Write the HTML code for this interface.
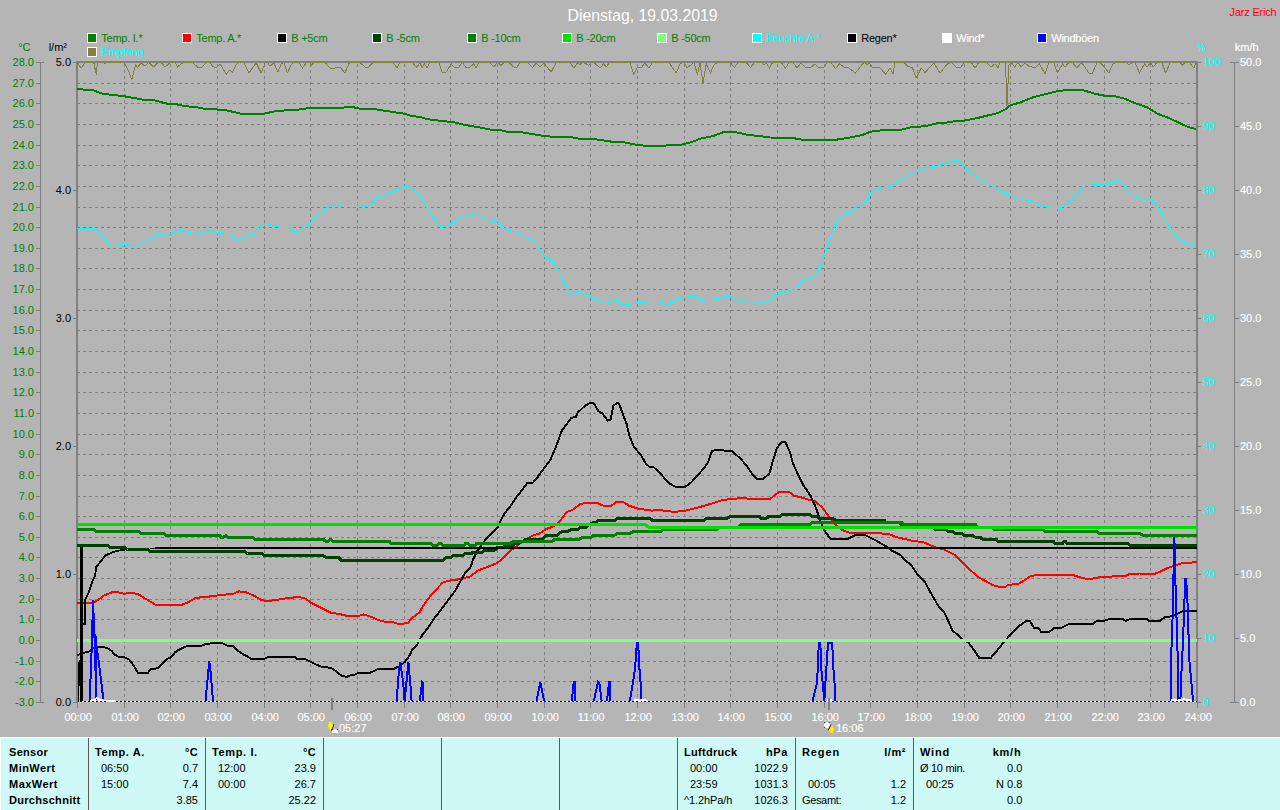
<!DOCTYPE html>
<html lang="de"><head><meta charset="utf-8"><title>Dienstag, 19.03.2019</title>
<style>
html,body{margin:0;padding:0;}
body{width:1280px;height:810px;overflow:hidden;background:#b5b5b5;position:relative;font-family:"Liberation Sans",Arial,sans-serif;font-size:11px;}
#chart{position:absolute;left:0;top:0;display:block;}
#chart text{font-family:"Liberation Sans",Arial,sans-serif;font-size:11px;}
#legend text{letter-spacing:-0.25px}.w{stroke:#fff;stroke-width:0.15px}
.g{fill:#008000}.c{fill:#00ffff}.k{fill:#000}.w{fill:#fff}
#tbl{position:absolute;left:0;top:737px;width:1280px;height:73px;background:#cef9f6;border-top:1px solid #fff;border-left:1px solid #fff;box-sizing:border-box;}
#tbl .sep{position:absolute;top:0;width:1px;height:73px;background:#5a5a5a;}
#tbl .col{position:absolute;top:0;width:118px;height:74px;}
#tbl .row{position:absolute;left:0;width:118px;height:16px;line-height:16px;white-space:nowrap;color:#000;}
#tbl .row span{position:absolute;top:0;}
#tbl .l{left:7px}.t{left:13px}#tbl .f{left:8px}.r{right:var(--r,7px);text-align:right}
#tbl b{font-weight:bold;letter-spacing:0.3px}
</style></head><body>
<svg id="chart" width="1280" height="738" viewBox="0 0 1280 738">
<rect x="0" y="0" width="1280" height="738" fill="#b5b5b5"/>
<text x="642.5" y="21" text-anchor="middle" class="w" style="font-size:16px;stroke:none" textLength="150" lengthAdjust="spacingAndGlyphs">Dienstag, 19.03.2019</text>
<text x="1276.5" y="16" text-anchor="end" fill="#ff0000" style="letter-spacing:-0.2px">Jarz Erich</text>
<g id="legend">
<rect x="87.5" y="33.5" width="9" height="9" fill="#008000" stroke="#fff"/>
<text x="101.3" y="41.7" class="g">Temp. I.*</text>
<rect x="182.5" y="33.5" width="9" height="9" fill="#ff0000" stroke="#fff"/>
<text x="196.3" y="41.7" class="g">Temp. A.*</text>
<rect x="277.5" y="33.5" width="9" height="9" fill="#000000" stroke="#fff"/>
<text x="291.3" y="41.7" class="g">B +5cm</text>
<rect x="372.5" y="33.5" width="9" height="9" fill="#004000" stroke="#fff"/>
<text x="386.3" y="41.7" class="g">B -5cm</text>
<rect x="467.5" y="33.5" width="9" height="9" fill="#008000" stroke="#fff"/>
<text x="481.3" y="41.7" class="g">B -10cm</text>
<rect x="562.5" y="33.5" width="9" height="9" fill="#00e000" stroke="#fff"/>
<text x="576.3" y="41.7" class="g">B -20cm</text>
<rect x="657.5" y="33.5" width="9" height="9" fill="#80ff80" stroke="#fff"/>
<text x="671.3" y="41.7" class="g">B -50cm</text>
<rect x="752.5" y="33.5" width="9" height="9" fill="#00ffff" stroke="#fff"/>
<text x="766.3" y="41.7" class="c">Feuchte A.*</text>
<rect x="847.5" y="33.5" width="9" height="9" fill="#000000" stroke="#fff"/>
<text x="861.3" y="41.7" class="k">Regen*</text>
<rect x="942.5" y="33.5" width="9" height="9" fill="#ffffff" stroke="#fff"/>
<text x="956.3" y="41.7" class="w">Wind*</text>
<rect x="1037.5" y="33.5" width="9" height="9" fill="#0000ff" stroke="#fff"/>
<text x="1051.3" y="41.7" class="w">Windböen</text>
<rect x="87.5" y="47.5" width="9" height="9" fill="#808040" stroke="#fff"/>
<text x="101.3" y="55.7" class="c">Empfang</text>
</g>
<g id="grid" stroke="#808080" stroke-width="1" stroke-dasharray="3 3" shape-rendering="crispEdges">
<line x1="124.5" y1="703" x2="124.5" y2="62"/>
<line x1="170.5" y1="703" x2="170.5" y2="62"/>
<line x1="217.5" y1="703" x2="217.5" y2="62"/>
<line x1="264.5" y1="703" x2="264.5" y2="62"/>
<line x1="310.5" y1="703" x2="310.5" y2="62"/>
<line x1="357.5" y1="703" x2="357.5" y2="62"/>
<line x1="404.5" y1="703" x2="404.5" y2="62"/>
<line x1="450.5" y1="703" x2="450.5" y2="62"/>
<line x1="497.5" y1="703" x2="497.5" y2="62"/>
<line x1="544.5" y1="703" x2="544.5" y2="62"/>
<line x1="590.5" y1="703" x2="590.5" y2="62"/>
<line x1="637.5" y1="703" x2="637.5" y2="62"/>
<line x1="684.5" y1="703" x2="684.5" y2="62"/>
<line x1="730.5" y1="703" x2="730.5" y2="62"/>
<line x1="777.5" y1="703" x2="777.5" y2="62"/>
<line x1="824.5" y1="703" x2="824.5" y2="62"/>
<line x1="870.5" y1="703" x2="870.5" y2="62"/>
<line x1="917.5" y1="703" x2="917.5" y2="62"/>
<line x1="964.5" y1="703" x2="964.5" y2="62"/>
<line x1="1010.5" y1="703" x2="1010.5" y2="62"/>
<line x1="1057.5" y1="703" x2="1057.5" y2="62"/>
<line x1="1104.5" y1="703" x2="1104.5" y2="62"/>
<line x1="1150.5" y1="703" x2="1150.5" y2="62"/>
<line x1="77" y1="681.5" x2="1197" y2="681.5"/>
<line x1="77" y1="661.5" x2="1197" y2="661.5"/>
<line x1="77" y1="640.5" x2="1197" y2="640.5"/>
<line x1="77" y1="619.5" x2="1197" y2="619.5"/>
<line x1="77" y1="599.5" x2="1197" y2="599.5"/>
<line x1="77" y1="578.5" x2="1197" y2="578.5"/>
<line x1="77" y1="557.5" x2="1197" y2="557.5"/>
<line x1="77" y1="537.5" x2="1197" y2="537.5"/>
<line x1="77" y1="516.5" x2="1197" y2="516.5"/>
<line x1="77" y1="496.5" x2="1197" y2="496.5"/>
<line x1="77" y1="475.5" x2="1197" y2="475.5"/>
<line x1="77" y1="454.5" x2="1197" y2="454.5"/>
<line x1="77" y1="434.5" x2="1197" y2="434.5"/>
<line x1="77" y1="413.5" x2="1197" y2="413.5"/>
<line x1="77" y1="392.5" x2="1197" y2="392.5"/>
<line x1="77" y1="372.5" x2="1197" y2="372.5"/>
<line x1="77" y1="351.5" x2="1197" y2="351.5"/>
<line x1="77" y1="330.5" x2="1197" y2="330.5"/>
<line x1="77" y1="310.5" x2="1197" y2="310.5"/>
<line x1="77" y1="289.5" x2="1197" y2="289.5"/>
<line x1="77" y1="268.5" x2="1197" y2="268.5"/>
<line x1="77" y1="248.5" x2="1197" y2="248.5"/>
<line x1="77" y1="227.5" x2="1197" y2="227.5"/>
<line x1="77" y1="207.5" x2="1197" y2="207.5"/>
<line x1="77" y1="186.5" x2="1197" y2="186.5"/>
<line x1="77" y1="165.5" x2="1197" y2="165.5"/>
<line x1="77" y1="145.5" x2="1197" y2="145.5"/>
<line x1="77" y1="124.5" x2="1197" y2="124.5"/>
<line x1="77" y1="103.5" x2="1197" y2="103.5"/>
<line x1="77" y1="83.5" x2="1197" y2="83.5"/>
</g>
<g id="axisT" shape-rendering="crispEdges" stroke="#808080">
<line x1="40.5" y1="62" x2="40.5" y2="703"/>
<line x1="36" y1="702.5" x2="44" y2="702.5"/>
<line x1="36" y1="681.5" x2="40" y2="681.5"/>
<line x1="36" y1="661.5" x2="40" y2="661.5"/>
<line x1="36" y1="640.5" x2="40" y2="640.5"/>
<line x1="36" y1="619.5" x2="40" y2="619.5"/>
<line x1="36" y1="599.5" x2="40" y2="599.5"/>
<line x1="36" y1="578.5" x2="40" y2="578.5"/>
<line x1="36" y1="557.5" x2="40" y2="557.5"/>
<line x1="36" y1="537.5" x2="40" y2="537.5"/>
<line x1="36" y1="516.5" x2="40" y2="516.5"/>
<line x1="36" y1="496.5" x2="40" y2="496.5"/>
<line x1="36" y1="475.5" x2="40" y2="475.5"/>
<line x1="36" y1="454.5" x2="40" y2="454.5"/>
<line x1="36" y1="434.5" x2="40" y2="434.5"/>
<line x1="36" y1="413.5" x2="40" y2="413.5"/>
<line x1="36" y1="392.5" x2="40" y2="392.5"/>
<line x1="36" y1="372.5" x2="40" y2="372.5"/>
<line x1="36" y1="351.5" x2="40" y2="351.5"/>
<line x1="36" y1="330.5" x2="40" y2="330.5"/>
<line x1="36" y1="310.5" x2="40" y2="310.5"/>
<line x1="36" y1="289.5" x2="40" y2="289.5"/>
<line x1="36" y1="268.5" x2="40" y2="268.5"/>
<line x1="36" y1="248.5" x2="40" y2="248.5"/>
<line x1="36" y1="227.5" x2="40" y2="227.5"/>
<line x1="36" y1="207.5" x2="40" y2="207.5"/>
<line x1="36" y1="186.5" x2="40" y2="186.5"/>
<line x1="36" y1="165.5" x2="40" y2="165.5"/>
<line x1="36" y1="145.5" x2="40" y2="145.5"/>
<line x1="36" y1="124.5" x2="40" y2="124.5"/>
<line x1="36" y1="103.5" x2="40" y2="103.5"/>
<line x1="36" y1="83.5" x2="40" y2="83.5"/>
<line x1="36" y1="62.5" x2="44" y2="62.5"/>
</g>
<g id="lblT" class="g" text-anchor="end">
<text x="30.5" y="50.5">°C</text>
<text x="34" y="706.2">-3.0</text>
<text x="34" y="685.2">-2.0</text>
<text x="34" y="665.2">-1.0</text>
<text x="34" y="644.2">0.0</text>
<text x="34" y="623.2">1.0</text>
<text x="34" y="603.2">2.0</text>
<text x="34" y="582.2">3.0</text>
<text x="34" y="561.2">4.0</text>
<text x="34" y="541.2">5.0</text>
<text x="34" y="520.2">6.0</text>
<text x="34" y="500.2">7.0</text>
<text x="34" y="479.2">8.0</text>
<text x="34" y="458.2">9.0</text>
<text x="34" y="438.2">10.0</text>
<text x="34" y="417.2">11.0</text>
<text x="34" y="396.2">12.0</text>
<text x="34" y="376.2">13.0</text>
<text x="34" y="355.2">14.0</text>
<text x="34" y="334.2">15.0</text>
<text x="34" y="314.2">16.0</text>
<text x="34" y="293.2">17.0</text>
<text x="34" y="272.2">18.0</text>
<text x="34" y="252.2">19.0</text>
<text x="34" y="231.2">20.0</text>
<text x="34" y="211.2">21.0</text>
<text x="34" y="190.2">22.0</text>
<text x="34" y="169.2">23.0</text>
<text x="34" y="149.2">24.0</text>
<text x="34" y="128.2">25.0</text>
<text x="34" y="107.2">26.0</text>
<text x="34" y="87.2">27.0</text>
<text x="34" y="66.2">28.0</text>
</g>
<g id="lblR" class="k" text-anchor="end">
<text x="67" y="50.5">l/m²</text>
<text x="71" y="706.2">0.0</text>
<text x="71" y="578.2">1.0</text>
<text x="71" y="450.2">2.0</text>
<text x="71" y="322.2">3.0</text>
<text x="71" y="194.2">4.0</text>
<text x="71" y="66.2">5.0</text>
</g>
<g shape-rendering="crispEdges" stroke="#808080">
<line x1="73" y1="702.5" x2="77" y2="702.5"/>
<line x1="73" y1="574.5" x2="77" y2="574.5"/>
<line x1="73" y1="446.5" x2="77" y2="446.5"/>
<line x1="73" y1="318.5" x2="77" y2="318.5"/>
<line x1="73" y1="190.5" x2="77" y2="190.5"/>
<line x1="73" y1="62.5" x2="77" y2="62.5"/>
</g>
<g id="lblH" class="c">
<text x="1197.5" y="50.5" textLength="8" lengthAdjust="spacingAndGlyphs">%</text>
<text x="1203" y="706.2">0</text>
<text x="1203" y="642.2">10</text>
<text x="1203" y="578.2">20</text>
<text x="1203" y="514.2">30</text>
<text x="1203" y="450.2">40</text>
<text x="1203" y="386.2">50</text>
<text x="1203" y="322.2">60</text>
<text x="1203" y="258.2">70</text>
<text x="1203" y="194.2">80</text>
<text x="1203" y="130.2">90</text>
<text x="1203" y="66.2">100</text>
</g>
<g shape-rendering="crispEdges" stroke="#808080">
<line x1="1197" y1="702.5" x2="1201" y2="702.5"/>
<line x1="1197" y1="638.5" x2="1201" y2="638.5"/>
<line x1="1197" y1="574.5" x2="1201" y2="574.5"/>
<line x1="1197" y1="510.5" x2="1201" y2="510.5"/>
<line x1="1197" y1="446.5" x2="1201" y2="446.5"/>
<line x1="1197" y1="382.5" x2="1201" y2="382.5"/>
<line x1="1197" y1="318.5" x2="1201" y2="318.5"/>
<line x1="1197" y1="254.5" x2="1201" y2="254.5"/>
<line x1="1197" y1="190.5" x2="1201" y2="190.5"/>
<line x1="1197" y1="126.5" x2="1201" y2="126.5"/>
<line x1="1197" y1="62.5" x2="1201" y2="62.5"/>
</g>
<g shape-rendering="crispEdges" stroke="#808080">
<line x1="1234.5" y1="62" x2="1234.5" y2="703"/>
<line x1="1230" y1="702.5" x2="1239" y2="702.5"/>
<line x1="1235" y1="638.5" x2="1239" y2="638.5"/>
<line x1="1235" y1="574.5" x2="1239" y2="574.5"/>
<line x1="1235" y1="510.5" x2="1239" y2="510.5"/>
<line x1="1235" y1="446.5" x2="1239" y2="446.5"/>
<line x1="1235" y1="382.5" x2="1239" y2="382.5"/>
<line x1="1235" y1="318.5" x2="1239" y2="318.5"/>
<line x1="1235" y1="254.5" x2="1239" y2="254.5"/>
<line x1="1235" y1="190.5" x2="1239" y2="190.5"/>
<line x1="1235" y1="126.5" x2="1239" y2="126.5"/>
<line x1="1230" y1="62.5" x2="1239" y2="62.5"/>
</g>
<g id="lblW" class="w">
<text x="1234.8" y="50.5">km/h</text>
<text x="1240" y="706.2">0.0</text>
<text x="1240" y="642.2">5.0</text>
<text x="1240" y="578.2">10.0</text>
<text x="1240" y="514.2">15.0</text>
<text x="1240" y="450.2">20.0</text>
<text x="1240" y="386.2">25.0</text>
<text x="1240" y="322.2">30.0</text>
<text x="1240" y="258.2">35.0</text>
<text x="1240" y="194.2">40.0</text>
<text x="1240" y="130.2">45.0</text>
<text x="1240" y="66.2">50.0</text>
</g>
<g shape-rendering="crispEdges" stroke="#808080">
<line x1="77.5" y1="702" x2="77.5" y2="708"/>
<line x1="124.5" y1="702" x2="124.5" y2="708"/>
<line x1="170.5" y1="702" x2="170.5" y2="708"/>
<line x1="217.5" y1="702" x2="217.5" y2="708"/>
<line x1="264.5" y1="702" x2="264.5" y2="708"/>
<line x1="310.5" y1="702" x2="310.5" y2="708"/>
<line x1="357.5" y1="702" x2="357.5" y2="708"/>
<line x1="404.5" y1="702" x2="404.5" y2="708"/>
<line x1="450.5" y1="702" x2="450.5" y2="708"/>
<line x1="497.5" y1="702" x2="497.5" y2="708"/>
<line x1="544.5" y1="702" x2="544.5" y2="708"/>
<line x1="590.5" y1="702" x2="590.5" y2="708"/>
<line x1="637.5" y1="702" x2="637.5" y2="708"/>
<line x1="684.5" y1="702" x2="684.5" y2="708"/>
<line x1="730.5" y1="702" x2="730.5" y2="708"/>
<line x1="777.5" y1="702" x2="777.5" y2="708"/>
<line x1="824.5" y1="702" x2="824.5" y2="708"/>
<line x1="870.5" y1="702" x2="870.5" y2="708"/>
<line x1="917.5" y1="702" x2="917.5" y2="708"/>
<line x1="964.5" y1="702" x2="964.5" y2="708"/>
<line x1="1010.5" y1="702" x2="1010.5" y2="708"/>
<line x1="1057.5" y1="702" x2="1057.5" y2="708"/>
<line x1="1104.5" y1="702" x2="1104.5" y2="708"/>
<line x1="1150.5" y1="702" x2="1150.5" y2="708"/>
<line x1="1197.5" y1="702" x2="1197.5" y2="708"/>
</g>
<g id="lblX" class="w" text-anchor="middle">
<text x="78.2" y="721">00:00</text>
<text x="125.2" y="721">01:00</text>
<text x="171.2" y="721">02:00</text>
<text x="218.2" y="721">03:00</text>
<text x="265.2" y="721">04:00</text>
<text x="311.2" y="721">05:00</text>
<text x="358.2" y="721">06:00</text>
<text x="405.2" y="721">07:00</text>
<text x="451.2" y="721">08:00</text>
<text x="498.2" y="721">09:00</text>
<text x="545.2" y="721">10:00</text>
<text x="591.2" y="721">11:00</text>
<text x="638.2" y="721">12:00</text>
<text x="685.2" y="721">13:00</text>
<text x="731.2" y="721">14:00</text>
<text x="778.2" y="721">15:00</text>
<text x="825.2" y="721">16:00</text>
<text x="871.2" y="721">17:00</text>
<text x="918.2" y="721">18:00</text>
<text x="965.2" y="721">19:00</text>
<text x="1011.2" y="721">20:00</text>
<text x="1058.2" y="721">21:00</text>
<text x="1105.2" y="721">22:00</text>
<text x="1151.2" y="721">23:00</text>
<text x="1198.2" y="721">24:00</text>
</g>
<g shape-rendering="crispEdges" stroke="#808080" stroke-width="2" fill="none">
<line x1="77" y1="61" x2="77" y2="703"/>
<line x1="76" y1="62" x2="1198" y2="62"/>
<line x1="1197" y1="61" x2="1197" y2="703"/>
</g>
<g id="series" fill="none" stroke-linejoin="round" stroke-linecap="butt" shape-rendering="crispEdges">
<path d="M77.2,89.2 L92.5,90 L102.5,93.8 L123.8,96.2 L145,100 L155,100.5 L167.5,103.8 L177.5,104.5 L185,106.2 L195,107 L205,108.8 L225,110 L242.5,114 L262.5,114 L277.5,110.8 L295,110 L310,108 L340,108 L347.5,107 L352.5,107 L360,108.8 L375,109.2 L385,110.8 L405,113.8 L412.5,116.2 L420,116.8 L427.5,119.2 L455,122.5 L465,125 L480,127.5 L490,129.5 L500,130 L507.5,131.8 L520,132 L542.5,135.8 L552.5,136.8 L570,137 L580,138.8 L592.5,138.8 L612.5,141.8 L625,142.5 L637.5,145 L650,146.2 L660,146.2 L670,145 L682.5,144.5 L692.5,141.8 L700,138.8 L712.5,136.2 L722.5,132.5 L732.5,131.8 L740,133 L747.5,135 L757.5,135.8 L770,137.5 L792.5,138 L801.2,139.5 L837.5,139.5 L850,137.5 L862.5,135 L870,131.8 L880,130.5 L900,130 L910,127.5 L925,126.2 L937.5,123.2 L947.5,122.5 L955,121.2 L965,120.5 L977.5,118 L987.5,115.5 L997.5,113.2 L1005,109.5 L1010,105.5 L1020,102.5 L1032.5,97.5 L1045,94.2 L1057.5,91.2 L1067.5,90 L1082.5,90 L1095,93.8 L1105,95.8 L1115,96.2 L1125,98.8 L1135,103.2 L1147.5,107.5 L1157.5,113.8 L1167.5,117.5 L1177.5,122 L1187.5,126.8 L1196.2,129.2" stroke="#008000" stroke-width="2"/>
<path d="M77.2,602.8 L93.4,602.8 L96.2,601.2 L103.8,595.6 L113.1,591.9 L118.8,592.4 L124.4,593.8 L130,592.8 L137.5,593.8 L145,598.4 L155.3,604.6 L182.5,604.6 L188.1,602.2 L195.6,597.9 L208.8,596.6 L220,595.1 L233.1,593.8 L238.8,591.3 L246.2,592.4 L253.8,595.6 L261.2,599.8 L266.9,601.2 L276.2,599.9 L285.6,598.4 L298.8,596.9 L304.4,598.4 L305,598.4 L311.6,603.1 L320.9,607.8 L331.2,612.9 L338.8,613.8 L346.2,615.7 L359.4,615.7 L363.1,614.4 L372.5,617.2 L378.1,620 L385.6,621.9 L393.1,622.2 L397.8,623.8 L402.5,623.8 L408.1,622.8 L411.9,618.1 L419.4,612.5 L423.1,605.9 L429.7,596.6 L436.2,589.6 L442.8,582.5 L449.4,580.6 L460.6,579.1 L470,576.5 L478.4,570.3 L486.9,567.1 L496.2,563.4 L500,560.9 L511.2,550 L522.5,541.6 L531.9,535.9 L539.4,533.5 L546.9,528.8 L554.4,526 L560,521.3 L566.6,511.9 L572.2,510.1 L580.6,503.7 L588.1,503.1 L597.5,503.1 L603.1,505.6 L610.6,506.5 L616.2,501.8 L622.8,501.6 L629.4,505.9 L638.8,508.8 L651.9,510.6 L659.4,510.1 L674.4,511.9 L685.6,510.6 L696.9,507.8 L710,504.1 L723.1,499.9 L734.4,498.8 L743.1,497.8 L748.8,498.8 L770.3,498.8 L775,495 L779.7,491.8 L789.1,491.8 L793.8,495.6 L801.2,497.4 L808.8,499.7 L815.3,501.2 L821.9,507.2 L827.5,514.7 L835,524.1 L842.5,530.2 L850,532.9 L878.1,533.1 L889.4,534.4 L896.9,537.2 L912.8,540.9 L923.1,542.2 L936.2,547.5 L943.8,549.4 L955,555 L966.2,566.2 L977.5,576.6 L992.5,585 L999.1,586.9 L1005.6,586.9 L1007.5,585 L1018.8,583.7 L1030,576.6 L1035.6,575.1 L1073.1,575.1 L1078.8,576.9 L1086.2,578.8 L1091.9,578.8 L1101.2,576.9 L1110.6,576.9 L1114.4,575.9 L1125.6,575.9 L1129.4,574.1 L1139.7,573.5 L1150,573.5 L1155.6,573.5 L1161.2,571.2 L1166.9,568.4 L1174.4,565.6 L1181.9,563.2 L1189.4,562.8 L1196.9,561.9" stroke="#ff0000" stroke-width="2"/>
<path d="M77.2,655.2 L82.6,653 L89.3,651.5 L93,648.5 L99.6,646.7 L107,647.8 L111.5,650.7 L114.4,654.4 L118.9,657 L124.8,657.4 L129.3,659.6 L133.7,665.6 L138.1,673 L147.8,673 L150.7,669.3 L158.1,668.2 L161.9,664.1 L166.3,659.3 L170.7,657.4 L175.2,652.2 L179.6,649.3 L187,646 L201.9,645.6 L206.3,643.6 L216.7,643.3 L221.1,642.6 L227,645.6 L233,646 L236.7,650 L243.3,654.4 L250,657.9 L251.2,658.8 L264.4,658.8 L268.1,656.9 L294.4,656.6 L297.2,658.8 L305.6,659.4 L313.1,663.1 L320.6,666.5 L326.2,666.9 L332.8,668.8 L337.5,672.5 L342.2,676.2 L346.9,676.8 L350.6,675.3 L354.4,674.9 L358.1,673.1 L369.4,672.9 L373.1,671.6 L377.8,669.1 L393.8,668.8 L399.4,666.3 L405,661.8 L409.7,655.6 L411.6,650.9 L417.2,644.4 L421.9,635.6 L427.5,628.4 L433.1,620 L441.6,608.8 L448.1,600.3 L455.6,590 L464.4,574.1 L470.9,566.6 L472.8,560 L477.5,550.6 L485,540.3 L491.6,533.8 L498.1,527.2 L500,522.2 L503.8,514.7 L510.3,506.2 L515.9,497.8 L522.5,489.4 L527.2,483.2 L532.8,482.8 L537.5,477.2 L543.1,469.7 L550.6,459.4 L556.2,446.2 L561.9,430.3 L565.6,425.6 L571.2,418.1 L575.9,416.8 L577.8,412.5 L584.4,406.3 L589.1,403.5 L592.8,402.8 L594.7,404.6 L598.4,411.2 L602.2,413.4 L607.8,420.6 L610.6,420 L613.4,405.9 L617.2,402.6 L619.1,403.5 L621.9,411.6 L626.6,423.8 L629.4,435.9 L634.1,447.2 L640.6,454.7 L646.2,464.1 L649.1,466.5 L652.8,466.5 L657.5,470.6 L663.1,476.6 L668.8,483.2 L675.3,486.6 L685.6,486.6 L691.2,482.4 L696.9,476.2 L703.4,468.8 L708.1,462.2 L711.9,451.3 L715.6,450 L723.1,450 L725.9,451.5 L731.6,450.6 L741.2,459.4 L746.9,465.9 L752.5,474.4 L756.2,478.5 L763.8,478.5 L769.4,473.4 L773.1,460.3 L776.9,448.1 L781.6,442.1 L785.3,442.1 L790,451.9 L792.8,463.1 L797.5,473.4 L803.1,484.7 L810.6,495.9 L815.3,506.2 L820,519.4 L823.8,529.7 L830.3,538.7 L848.1,538.7 L855.6,534.9 L865,534.9 L872.5,538.7 L880,542.8 L885.6,546 L891.2,550.3 L900.6,555 L905.3,560.6 L910.9,564.4 L917.5,574.7 L925,582.2 L930.6,592.5 L938.1,605.6 L944.7,613.1 L952.2,630 L962.5,639.4 L968.1,642.2 L973.8,649.7 L979.4,658.1 L990.6,658.1 L996.2,651.6 L1003.8,642.2 L1011.2,633.8 L1018.8,626.2 L1026.2,621 L1030,621 L1033.8,627.6 L1038.4,628.1 L1041.2,631.9 L1048.8,631.9 L1054.4,628.1 L1061.9,627.6 L1067.5,624.7 L1071.2,623.8 L1092.8,623.8 L1097.5,620.6 L1105,620.6 L1109.7,618.7 L1122.8,618.7 L1125.6,620.9 L1131.2,618.7 L1146.2,618.7 L1149.1,620.9 L1160.3,620.6 L1165,617.2 L1172.5,616.2 L1178.1,613.4 L1182.8,611 L1196.9,611" stroke="#000" stroke-width="2"/>
<path d="M77.2,545.4 L108,545.4 L110,547.5 L125,547.5 L127.5,549.5 L148,549.5 L150,551.4 L245,551.4 L247.5,553.5 L261.9,553.5 L264.4,555.3 L323.1,555.3 L325.6,557.4 L338.3,557.4 L341.3,560.4 L443.1,560.4 L445.6,557.9 L451,557.9 L452.5,555.8 L462.5,555.8 L465,553.9 L471,553.9 L473,552 L482.5,552 L485,550 L495,550 L497.5,547.6 L502.5,547.6 L505,545.8 L512.5,545.8 L514.5,543.5 L518.5,543.5 L521,541.4 L523,541.4 L525,539.4 L542,539.4 L546,535.9 L556,535.9 L557,535.3 L557,535.3 L562,531.4 L568.1,531.4 L570.6,529.6 L577.5,529.6 L581,527.3 L586,527.3 L589,524.5 L590.5,524.5 L593,522.3 L596.5,522.3 L598.5,520.4 L615,520.4 L617.5,518.3 L650,518.3 L652.5,520.4 L703.9,520.4 L706.9,518.3 L727.5,518.3 L730,516.4 L759.5,516.4 L761,518.3 L765.5,518.3 L765.5,518.3 L766.3,518.3 L768.8,516.4 L779.5,516.4 L782,514.6 L809.5,514.6 L812,516.4 L816.5,516.4 L819,518.4 L833,518.4 L835,520 L884,520 L886,522.5 L899,522.5 L901,524.5 L914,524.5 L917,527.4 L932.4,527.4 L934.4,529.1 L945.5,529.1 L947.5,531.4 L953,531.4 L955,533.3 L961.5,533.3 L964,535.3 L972.5,535.3 L975,537 L980,537 L982,539 L996,539 L998,541.4 L1053.5,541.4 L1055,543.5 L1061.5,543.5 L1061.5,543.5 L1062.5,543.5 L1064,541.4 L1065,541.4 L1065,541.4 L1065.5,541.4 L1067,543.6 L1128,543.6 L1130,545.6 L1197,545.6 L1197,545.6" stroke="#004000" stroke-width="3"/>
<path d="M77.2,529.6 L94.1,529.6 L95.6,531.4 L139,531.4 L141,533.5 L164,533.5 L166,535.6 L219.5,535.6 L221.5,537.5 L223.1,537.5 L225.6,535.6 L226.2,535.6 L228.2,537.4 L253.1,537.4 L255.6,539.6 L323.5,539.6 L326,541.6 L327.5,541.6 L330,539.6 L330.5,539.6 L333,541.4 L389.5,541.4 L391,543.4 L431,543.4 L433,545.6 L435.5,545.6 L435.5,545.6 L436.9,545.6 L439.4,543.1 L440.5,543.1 L442.5,545.2 L463.5,545.2 L463.5,545.2 L464,545.2 L466,543.1 L467,543.1 L469.5,545.2 L475,545.2 L476.5,543.6 L510,543.6 L513,541.4 L552.5,541.4 L555,539 L580,539 L582.5,537.2 L591,537.2 L594,535.3 L614.5,535.3 L617.5,533.4 L630,533.4 L633,531.4 L661,531.4 L663,529.2 L717.5,529.2 L719,527.4 L738.8,527.4 L741.3,524.6 L809.5,524.6 L812,522.5 L901.5,522.5 L904,524.5 L975.5,524.5 L978,527.4 L992,527.4 L994,529.1 L1042.5,529.1 L1045,531.4 L1096.9,531.4 L1099.4,533.4 L1140,533.4 L1143,535.6 L1197,535.6 L1197,535.6" stroke="#008000" stroke-width="3"/>
<path d="M77.2,524.5 L645.3,524.5 L649,527.7 L1197,527.7" stroke="#00e000" stroke-width="3"/>
<path d="M77.2,640.5 L1197,640.5" stroke="#80ff80" stroke-width="3"/>
<path d="M77.2,228.2 L95,228.2 L100,233.8 L110,244.5 L115,245.8 L123.8,243.8 L135,246.2 L145,241.2 L160,234.5 L165,235.5 L180,230 L187.5,232.5 L197.5,234.2 L207.5,230 L217.5,233 L227.5,233.2 L232.5,236.2 L237,240.5 L242.5,238 L252.5,234.2 L257.5,228 L265,223.2 L270,225 L280,227.5 L288.8,227.5 L295.8,233 L300,230 L307.5,226.2 L313.8,218.8 L320,213.8 L323.8,211.8 L327.5,207 L335,203 L338.8,204.5 L342.5,203.2 L357.5,203.2 L366.2,206.8 L370,205 L377.5,197.5 L387.5,193.2 L395,190.8 L401.2,186.8 L407.5,185.8 L412.5,188.8 L420,195.8 L430,212.5 L435,218.8 L440,226.2 L446.2,225.8 L455,222 L462.5,215.5 L467.5,216.2 L474.5,213.2 L478.8,214.5 L486.2,219.5 L497.5,220.8 L505,229.2 L515,232 L517.5,233.1 L531.6,239.7 L539.4,248.8 L545.6,257.5 L551.9,260.6 L559.7,273.1 L564.4,283.4 L570.6,294.1 L575.3,292.5 L579.4,291.9 L583.8,294.4 L588.8,294.1 L592.5,298.1 L600.3,300.6 L606.6,303.8 L611.2,299.7 L619.1,300.3 L622.2,305 L633.1,303.8 L637.8,302.2 L644.1,302.8 L651.9,301.2 L658.1,301.2 L667.5,304.4 L676.9,299.7 L684.7,297.5 L695.6,295.9 L700.3,300.3 L714.4,299.1 L717.5,297.2 L720.6,299.7 L725.3,296.6 L730,295.9 L734.7,299.1 L739.4,300.6 L742.5,299.7 L750.3,303.4 L755,301.2 L761.2,302.8 L772.2,298.8 L775.3,294.4 L780,291.9 L784.7,292.5 L792.5,289.4 L801.9,280.9 L811.2,277.8 L816.9,273.8 L823.8,257.5 L830,238.8 L837.8,220 L838.8,218 L847.5,212.5 L851.2,212.5 L856.2,206.8 L866.2,202 L871.2,191.8 L882.5,187.5 L890,186.8 L897.5,181.2 L907.5,175.8 L917.5,170.8 L927.5,167.5 L937.5,166.2 L947.5,162.5 L956.2,160 L961.2,162.5 L970,171.8 L980,179.2 L987.5,183.2 L993.8,185.8 L1000,190.8 L1010,195.5 L1015.5,198 L1021.2,197.5 L1027,200.5 L1031.2,200.8 L1037.5,204.2 L1047.5,207 L1056.2,207.5 L1060,208.8 L1063.8,204.5 L1070,201.8 L1073.8,197.5 L1078.8,193 L1082.5,186.2 L1085,185 L1088,185.8 L1091.2,184.5 L1108.8,184.5 L1113.8,180.8 L1117.5,180.5 L1123.8,184.5 L1130,195 L1137.5,197 L1146.2,200.5 L1150,198.8 L1153.8,200.8 L1160,210.8 L1167.5,223.8 L1173.8,233.8 L1182.5,241.2 L1196.2,245.8" stroke="#00ffff" stroke-width="1.2"/>
<path d="M81.3,702 L81.3,547" stroke="#000" stroke-width="2.6"/>
<path d="M150,548.6 L156,548.6 L156,548.2 L1197,548.2" stroke="#000" stroke-width="1.7"/>
<path d="M78.6,702 L78.8,683 L79.3,660" stroke="#000" stroke-width="1.5"/>
<path d="M82,625 L84.8,624 L84.8,601 L88.8,592 L92.5,581 L95.3,575 L95.9,567.5 L100.9,561 L105.6,555.3 L111.3,552.9 L117.8,550.6 L125,550.2" stroke="#000" stroke-width="1.9"/>
<path d="M82,701.5 L1197,701.5" stroke="#000" stroke-width="1.6"/>
<path d="M82,701.5 L1197,701.5" stroke="#fff" stroke-width="1.6" stroke-dasharray="2 2"/>
<path d="M89.7,701 L92,640 L93,600.5 L94.6,640 L96.4,700 L95.3,634.5 L97,650 L98.9,662.6 L103.3,699 M205.5,701 L206.3,692 L209.3,661.5 L210.7,673 L213,701 M396.6,701 L398.5,676 L400.3,662 L403.1,682 L404.6,701 L407.4,672.5 L408.4,662 L410.6,687 L411.6,701 M419.6,701 L422.3,682 L423.4,683 L423.4,701 M536.6,701 L540.3,682 L544.1,701 M571.8,701 L573.7,682 L575,682 L575,701 M593.8,701 L598.1,682 L599.4,683 L601.6,701 M606.9,701 L609.1,682 L610.3,682 L610.3,701 M629.8,701 L633.1,682 L635,669 L636.9,643 L638.2,643 L638.8,657.5 L639.7,672.5 L641,687.5 L641.6,701 M812.5,701 L817.2,682 L818.1,656 L819,643 L820.4,643 L820.9,665 L822.8,684 L824.3,701 L825.3,684 L826.6,665 L828,643 L832.2,643 L833.5,670 L835,689 L835.4,701 M1170.6,701 L1171,661 L1172.5,620 L1173.4,579 L1174.4,537 L1175.3,579 L1176.6,620 L1177.8,661 L1178.1,701 M1180.4,701 L1180.9,682 L1182.3,656 L1183.4,631 L1184.3,604 L1185.3,579 L1186.2,579 L1187.5,603 L1188.4,631 L1189.4,661 L1191.3,682 L1193.1,701" stroke="#0000ff" stroke-width="2" stroke-linejoin="miter"/>
<path d="M90,700.5 L95,700 L96.7,697.5 L98.5,700 L104,700.5 L116,700.8 M634,700.5 L637,699.8 L640,700.8 L643,699.8 L648,700.8 M827,700.6 L829,699.5 L833,700.6 M1171,700.6 L1174,699.6 L1177,700.6 L1181,700 L1184,699.2 L1188,700 L1192,700.6" stroke="#fff" stroke-width="1.8"/>
<path d="M77.2,62.5 L81.2,68 L85,62.5 L93.8,62.5 L96.2,74.2 L97.5,62.5 L103.8,62.5 L105,63.8 L107,62.5 L123.8,62.5 L128.8,71.2 L131.8,80 L135.5,65 L137.5,67.5 L141.2,63 L145,66.2 L148.8,62.5 L153.8,67 L157.5,63 L161.2,62.5 L165,67 L168.8,63.8 L170,62.5 L175,62.5 L177.5,67 L181.2,63.8 L183.8,62.5 L192.5,62.5 L197.5,67 L201.2,68 L206.2,63 L210,62.5 L212.5,66.2 L216.2,68 L220,63.8 L226.2,74.2 L230,70 L232.5,72 L236.2,65 L238.8,62.5 L243.8,62.5 L248.8,73 L256.2,63 L261.2,73 L265,63 L267.5,62.5 L270,66.2 L273.8,63 L278,72 L281.2,63.8 L283.8,62.5 L287.5,73 L291.2,64.5 L293.8,62.5 L298.8,62.5 L302.5,68 L306.2,63 L310,62.5 L311.2,65.5 L313.8,62.5 L325,62.5 L330,68 L335,68 L340,67 L345,73 L348.8,63.8 L351.2,62.5 L360,62.5 L365,67 L368.8,67 L372.5,63 L376.2,62.5 L382.5,62.5 L392.5,62.5 L397,67.5 L400,62.5 L412.5,62.5 L416.2,67.5 L420,63 L422,68 L424.5,63.8 L427,68 L430,62.5 L438.8,62.5 L442.5,73 L446.2,72 L451.2,63.8 L453.8,67 L458.8,67 L462.5,62.5 L466.2,68 L470,67 L473.8,63.8 L476.2,68 L478.8,62.5 L490,62.5 L493.8,67 L497.5,62.5 L501.2,65.5 L503.8,62.5 L508.8,62.5 L513.8,67 L517,67 L520,62.5 L527.5,62.5 L532.5,67.5 L536.2,63 L540,67 L543.8,63 L551.2,72 L556.2,62.5 L570,62.5 L573.8,68 L577.5,63 L580,64.5 L582.5,62.5 L586.2,63.8 L588.8,65.5 L591.2,62.5 L593.8,62.5 L600,68 L603.8,63.8 L606.2,67 L609.5,62.5 L630,62.5 L633.8,74.2 L637.5,67 L641.2,68 L645,63 L648.8,68 L652.5,62.5 L668.8,62.5 L676.2,73 L680,63.8 L683.8,62.5 L687,68 L693.8,62.5 L697.5,74.2 L700,63 L703,83 L706.2,63.8 L710.5,73 L713.8,65 L717.5,62.5 L730,62.5 L734.5,67.5 L738,62.5 L746.2,62.5 L750.5,67.5 L754.5,62.5 L761.2,62.5 L763.8,65 L766.2,63 L769.5,68 L772.5,62.5 L781.2,62.5 L785.5,68 L788.8,63 L792.5,62.5 L797,67.5 L801.2,63 L805,67 L810,68 L815,63.8 L818.8,68 L823.8,67 L827.5,62.5 L831.2,62.5 L835.5,68.8 L839.5,63.8 L843.8,67 L848.8,68 L855.5,73 L862.5,63.8 L865,62.5 L867,64.5 L869.5,63 L872,67 L880,68 L885.5,74.2 L890,68 L893,74.2 L895,62.5 L903.8,62.5 L907.5,66.2 L912.5,68 L916.2,78 L921.2,68 L925,72.5 L933.8,63 L940,73 L947.5,63.8 L951.2,62.5 L956.2,67.5 L961.2,67 L963.8,62.5 L971.2,62.5 L975,68 L978.8,62.5 L986.2,62.5 L991.2,67 L995,63.8 L998,68 L1000,62.5 L1005.5,62.5 L1007,105.5 L1008.8,65 L1011.2,62.5 L1014.5,67 L1018,63 L1021.2,67 L1025,63 L1028.8,66.2 L1035,68 L1039.5,63.8 L1045,74.2 L1048.8,62.5 L1053.8,62.5 L1057.5,73 L1062.5,63.8 L1065,67 L1068.8,62.5 L1072.5,62.5 L1077,68 L1081.2,62.5 L1083.8,65.5 L1088.8,73 L1092.5,73 L1097,62.5 L1100,62.5 L1103.8,66.2 L1108.8,73 L1113,63.8 L1116.2,62.5 L1126.2,62.5 L1128.8,64.5 L1132.5,62.5 L1135,62.5 L1139.5,73 L1144.5,63.8 L1147,67 L1150.5,62.5 L1153,67 L1157,62.5 L1162,62.5 L1165.5,73 L1170,63 L1180,62.5 L1182.5,65 L1185,62.5 L1189.5,62.5 L1193.8,68 L1196.2,62.5" stroke="#808040" stroke-width="1"/>
</g>
<g id="sun">
<line x1="332" y1="698" x2="332" y2="710" stroke="#808080" stroke-width="2" shape-rendering="crispEdges"/>
<path d="M329.2,722 L331.7,722 L331.7,724 L333.6,724 L333.2,726 L330.9,730.6 L330,730.6 L328,726 L327.8,724 L329.2,724 Z" fill="#ffee00" shape-rendering="crispEdges"/>
<path d="M333.8,724 L333.4,726.2 L331.2,730.8" stroke="#101010" stroke-width="0.9" fill="none"/>
<path d="M332,733 L332,731 Q335.1,727.3 338.2,731 L338.2,733 Z" fill="#fff"/>
<rect x="332" y="729" width="1" height="1" fill="#2020a0"/><rect x="337" y="729" width="1" height="1" fill="#2020a0"/>
<text x="339" y="732" class="w">05:27</text>
<line x1="829" y1="698" x2="829" y2="710" stroke="#808080" stroke-width="2" shape-rendering="crispEdges"/>
<rect x="824" y="722" width="6" height="6" fill="#2020a0"/><circle cx="827" cy="725" r="3.1" fill="#fff"/>
<path d="M831.5,724.3 L834.5,730 L834.4,730.9 L832.8,730.9 L832.8,733 L830.1,733 L830.1,730.9 L828.6,730.9 L828.5,730 Z" fill="#ffee00" shape-rendering="crispEdges"/>
<path d="M831.2,724.2 L828.3,730.2" stroke="#101010" stroke-width="0.9" fill="none"/>
<text x="836" y="732" class="w">16:06</text>
</g>
</svg>
<div id="tbl">
<div class="sep" style="left:87px"></div>
<div class="sep" style="left:204px"></div>
<div class="sep" style="left:322px"></div>
<div class="sep" style="left:440px"></div>
<div class="sep" style="left:558px"></div>
<div class="sep" style="left:676px"></div>
<div class="sep" style="left:794px"></div>
<div class="sep" style="left:912px"></div>
<div class="col" style="left:0px;--r:7px">
<div class="row" style="top:6px"><span class="f"><b>Sensor</b></span></div>
<div class="row" style="top:22px"><span class="f"><b style="letter-spacing:0.47px">MinWert</b></span></div>
<div class="row" style="top:38px"><span class="f"><b style="letter-spacing:0.47px">MaxWert</b></span></div>
<div class="row" style="top:54px"><span class="f"><b>Durchschnitt</b></span></div>
</div>
<div class="col" style="left:87px;--r:8px">
<div class="row" style="top:6px"><span class="l"><b style="letter-spacing:0.58px">Temp. A.</b></span><span class="r"><b>°C</b></span></div>
<div class="row" style="top:22px"><span class="t">06:50</span><span class="r">0.7</span></div>
<div class="row" style="top:38px"><span class="t">15:00</span><span class="r">7.4</span></div>
<div class="row" style="top:54px"><span class="r">3.85</span></div>
</div>
<div class="col" style="left:204px;--r:7px">
<div class="row" style="top:6px"><span class="l"><b style="letter-spacing:0.63px">Temp. I.</b></span><span class="r"><b>°C</b></span></div>
<div class="row" style="top:22px"><span class="t">12:00</span><span class="r">23.9</span></div>
<div class="row" style="top:38px"><span class="t">00:00</span><span class="r">26.7</span></div>
<div class="row" style="top:54px"><span class="r">25.22</span></div>
</div>
<div class="col" style="left:676px;--r:7px">
<div class="row" style="top:6px"><span class="l"><b>Luftdruck</b></span><span class="r"><b style="letter-spacing:0.6px">hPa</b></span></div>
<div class="row" style="top:22px"><span class="t">00:00</span><span class="r">1022.9</span></div>
<div class="row" style="top:38px"><span class="t">23:59</span><span class="r">1031.3</span></div>
<div class="row" style="top:54px"><span class="l" style="letter-spacing:-0.1px">^1.2hPa/h</span><span class="r">1026.3</span></div>
</div>
<div class="col" style="left:794px;--r:7px">
<div class="row" style="top:6px"><span class="l"><b style="letter-spacing:0.9px">Regen</b></span><span class="r"><b style="letter-spacing:0.55px">l/m²</b></span></div>
<div class="row" style="top:22px"></div>
<div class="row" style="top:38px"><span class="t">00:05</span><span class="r">1.2</span></div>
<div class="row" style="top:54px"><span class="l" style="letter-spacing:-0.35px">Gesamt:</span><span class="r">1.2</span></div>
</div>
<div class="col" style="left:912px;--r:8.7px">
<div class="row" style="top:6px"><span class="l"><b style="letter-spacing:0.8px">Wind</b></span><span class="r" style="right:9.5px"><b style="letter-spacing:0.8px">km/h</b></span></div>
<div class="row" style="top:22px"><span class="l" style="letter-spacing:-0.3px">Ø 10 min.</span><span class="r">0.0</span></div>
<div class="row" style="top:38px"><span class="t">00:25</span><span class="r">N 0.8</span></div>
<div class="row" style="top:54px"><span class="r">0.0</span></div>
</div>
</div>
</body></html>
